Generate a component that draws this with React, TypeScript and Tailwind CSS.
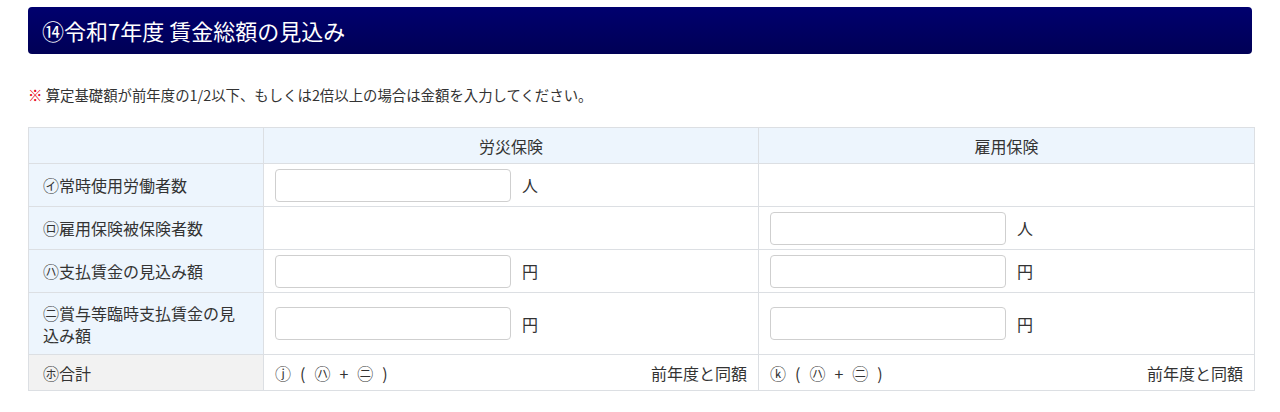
import React from 'react';

const font = { fontFamily: '"Noto Sans CJK JP", "Noto Sans", sans-serif' };

function NumInput() {
  return (
    <input
      type="text"
      className="h-[33px] w-[236px] rounded-[4px] border border-[#cfcfcf] bg-white px-2 text-[15px] outline-none"
    />
  );
}

function InputCell({ unit }: { unit?: string }) {
  if (!unit) return <td className="border border-[#dcdfe3] px-[11px]" />;
  return (
    <td className="border border-[#dcdfe3] px-[11px] py-[4px]">
      <div className="flex items-center gap-[11px]">
        <NumInput />
        <span>{unit}</span>
      </div>
    </td>
  );
}

function Formula({ head }: { head: string }) {
  return (
    <span className="flex items-center gap-[9px]">
      <span>{head}</span>
      <span>(</span>
      <span>㋩</span>
      <span>+</span>
      <span>㊁</span>
      <span>)</span>
    </span>
  );
}

const rows: { label: React.ReactNode; key: string; rosai?: string; koyo?: string; tall?: boolean }[] = [
  { key: 'a', label: '㋑常時使用労働者数', rosai: '人' },
  { key: 'b', label: '㋺雇用保険被保険者数', koyo: '人' },
  { key: 'c', label: '㋩支払賃金の見込み額', rosai: '円', koyo: '円' },
  {
    key: 'd',
    label: (
      <>
        ㊁賞与等臨時支払賃金の見
        <br />
        込み額
      </>
    ),
    rosai: '円',
    koyo: '円',
    tall: true,
  },
];

export default function App() {
  return (
    <div className="bg-white px-[28px] pt-[7px] pb-4 text-[#333]" style={font}>
      <div className="flex h-[47px] items-center rounded-[4px] bg-gradient-to-b from-[#00006e] to-[#000056] pl-[14px] text-[22px] text-white">
        ⑭令和7年度 賃金総額の見込み
      </div>

      <p className="mt-[31px] h-[20px] text-[14.4px] leading-[20px] text-[#333]">
        <span className="font-bold text-[#e60012]">※</span> 算定基礎額が前年度の1/2以下、もしくは2倍以上の場合は金額を入力してください。
      </p>

      <table className="mt-[22px] w-[1226px] table-fixed border-collapse text-[16px]">
        <colgroup>
          <col className="w-[235px]" />
          <col className="w-[495px]" />
          <col className="w-[496px]" />
        </colgroup>
        <thead>
          <tr className="h-[36px] bg-[#edf5fd]">
            <th className="border border-[#dcdfe3] font-normal" />
            <th className="border border-[#dcdfe3] font-normal">労災保険</th>
            <th className="border border-[#dcdfe3] font-normal">雇用保険</th>
          </tr>
        </thead>
        <tbody>
          {rows.map((r) => (
            <tr key={r.key} className={r.tall ? 'h-[62px]' : 'h-[43px]'}>
              <td className="border border-[#dcdfe3] bg-[#edf5fd] pl-[14px] pr-[8px] leading-[22px]">
                {r.label}
              </td>
              <InputCell unit={r.rosai} />
              <InputCell unit={r.koyo} />
            </tr>
          ))}
          <tr className="h-[36px]">
            <td className="border border-[#dcdfe3] bg-[#f2f2f2] pl-[14px]">㋭合計</td>
            <td className="border border-[#dcdfe3] px-[11px]">
              <div className="flex items-center justify-between">
                <Formula head="ⓙ" />
                <span>前年度と同額</span>
              </div>
            </td>
            <td className="border border-[#dcdfe3] px-[11px]">
              <div className="flex items-center justify-between">
                <Formula head="ⓚ" />
                <span>前年度と同額</span>
              </div>
            </td>
          </tr>
        </tbody>
      </table>
    </div>
  );
}
